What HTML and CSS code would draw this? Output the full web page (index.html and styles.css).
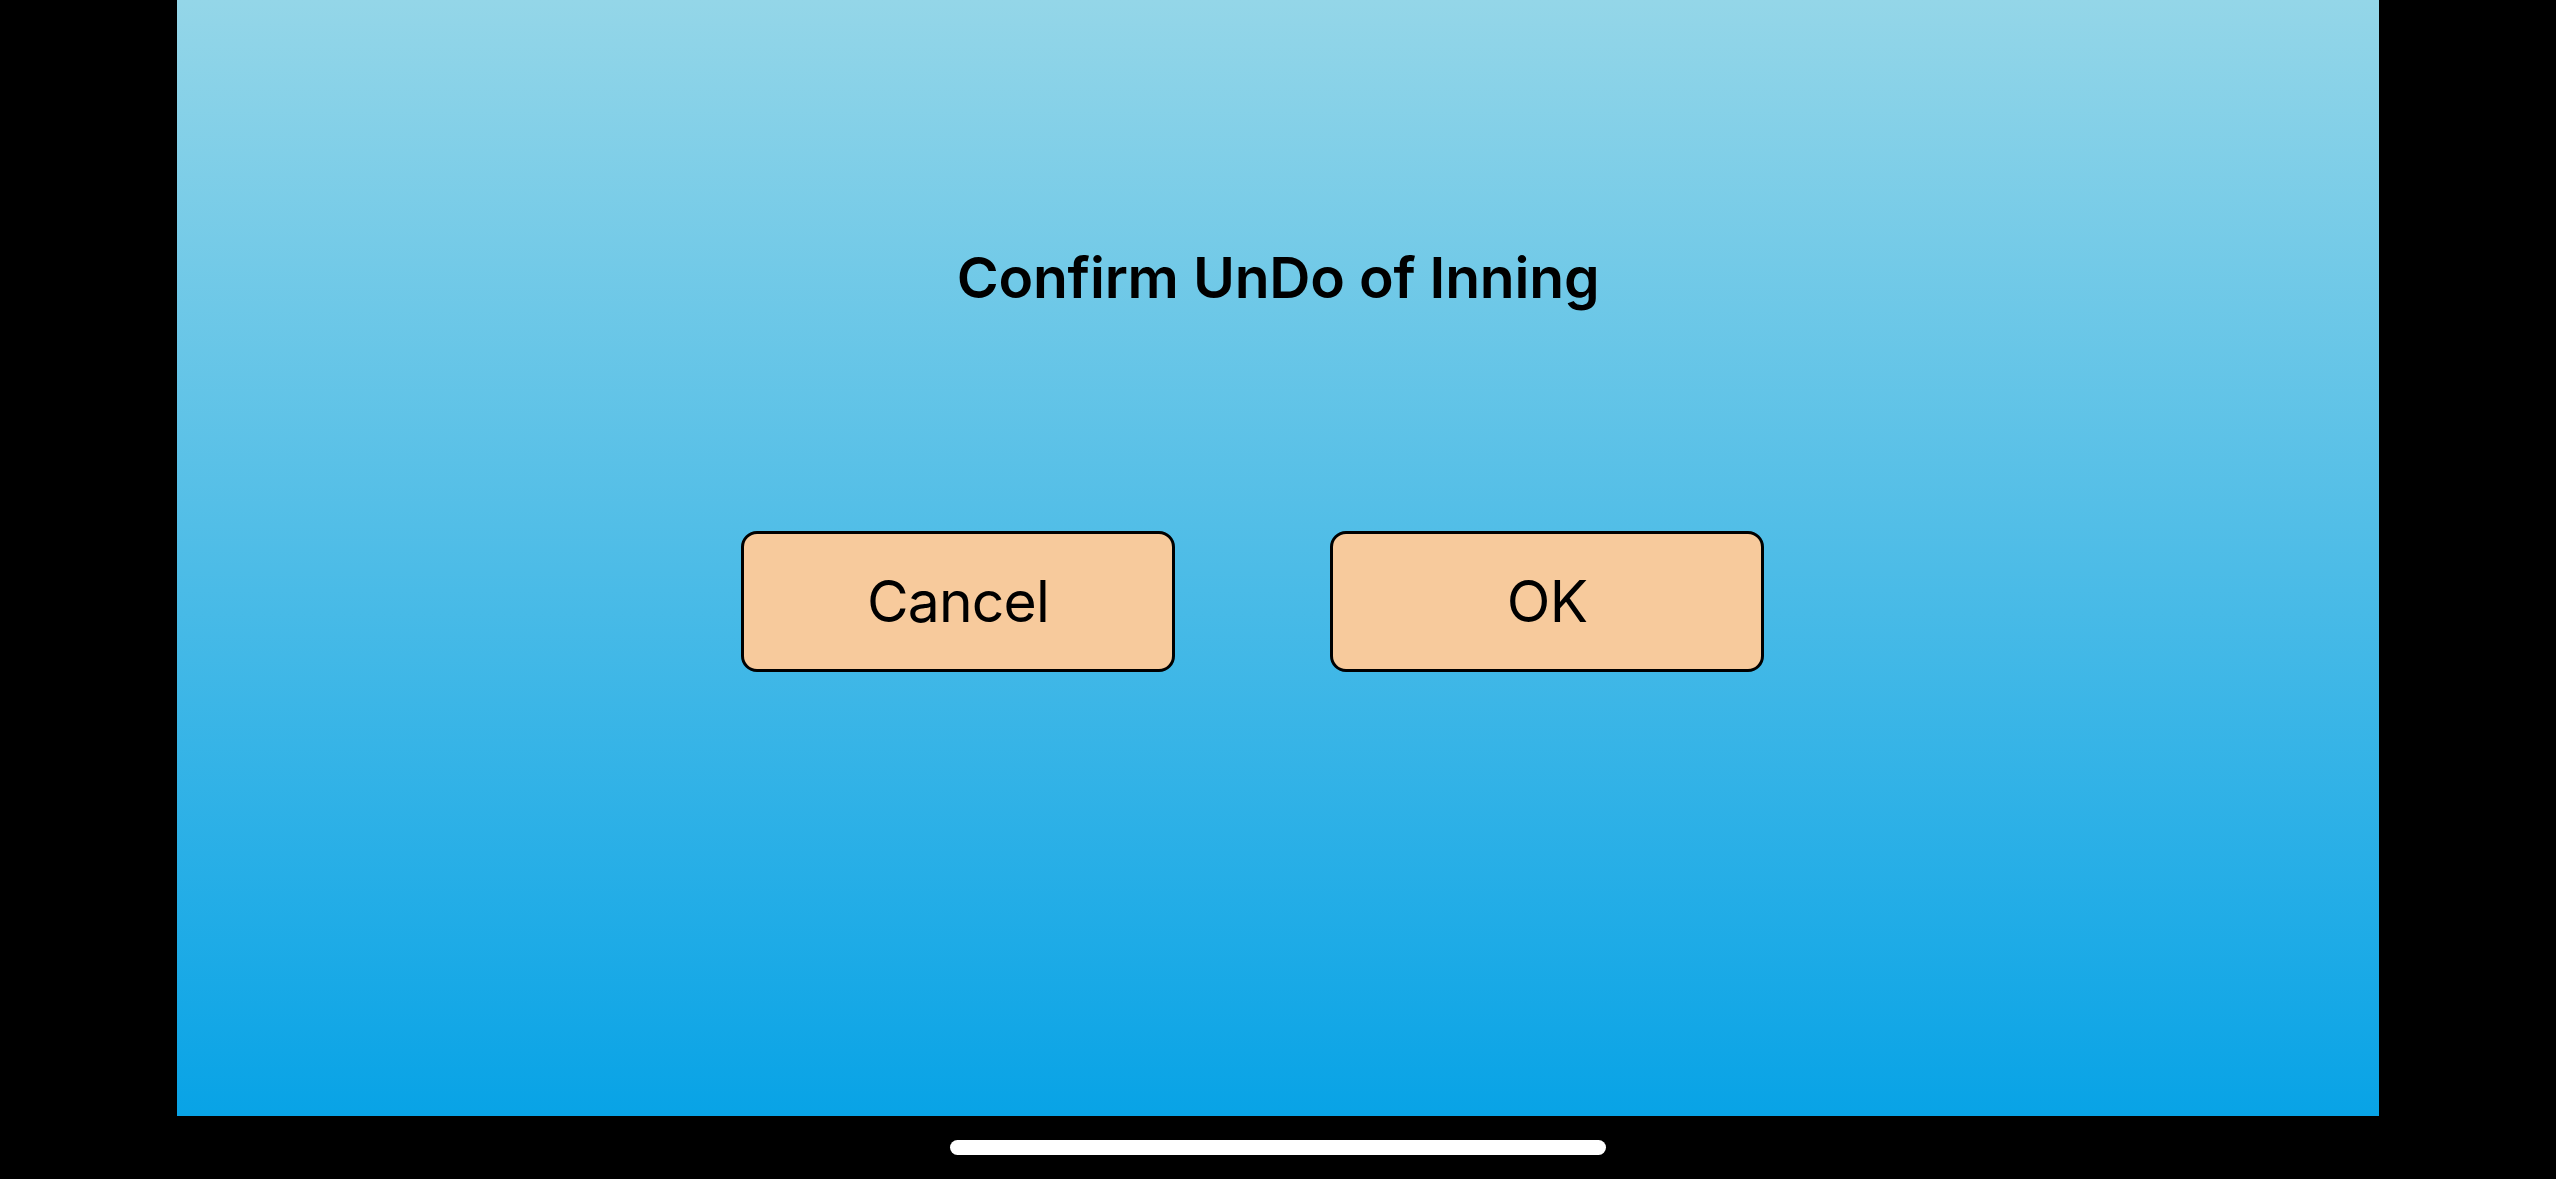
FILE: index.html
```html
<!DOCTYPE html>
<html lang="en">
<head>
<meta charset="utf-8">
<title>Confirm UnDo of Inning</title>
<link rel="stylesheet" href="styles.css">
</head>
<body>
<div class="device">
  <main class="screen">
    <h1 class="title">Confirm UnDo of Inning</h1>
    <div class="actions">
      <button class="btn" type="button">Cancel</button>
      <button class="btn" type="button">OK</button>
    </div>
  </main>
  <div class="home-bar">
    <span class="home-indicator"></span>
  </div>
</div>
</body>
</html>
```

FILE: styles.css
```css
html, body {
  margin: 0;
  padding: 0;
  background: #000;
}

body {
  width: 2556px;
  height: 1179px;
  overflow: hidden;
  font-family: Inter, "Noto Sans", "Liberation Sans", sans-serif;
}

.device {
  display: flex;
  flex-direction: column;
  width: 2556px;
  height: 1179px;
}

.screen {
  box-sizing: border-box;
  margin-left: 177px;
  width: 2202px;
  height: 1116px;
  background: linear-gradient(to bottom, #94d6e8 0%, #08a3e6 100%);
  display: flex;
  flex-direction: column;
  align-items: center;
  padding-top: 243px;
}

.title {
  margin: 0;
  font-size: 57px;
  line-height: 70px;
  font-weight: 600;
  color: #000;
  letter-spacing: -0.2px;
}

.actions {
  display: flex;
  justify-content: center;
  gap: 155px;
  width: 100%;
  box-sizing: border-box;
  padding-right: 51px;
  margin-top: 218px;
}

.btn {
  box-sizing: border-box;
  width: 434px;
  height: 141px;
  border: 3px solid #000;
  border-radius: 16px;
  background: #f7ca9c;
  color: #000;
  font-family: Inter, "Noto Sans", "Liberation Sans", sans-serif;
  font-size: 57px;
  font-weight: 400;
  letter-spacing: -0.8px;
  padding: 0;
  display: flex;
  align-items: center;
  justify-content: center;
}

.home-bar {
  flex: 1;
  display: flex;
  justify-content: center;
  padding-top: 24px;
}

.home-indicator {
  display: block;
  width: 656px;
  height: 15px;
  border-radius: 8px;
  background: #fff;
}
```
